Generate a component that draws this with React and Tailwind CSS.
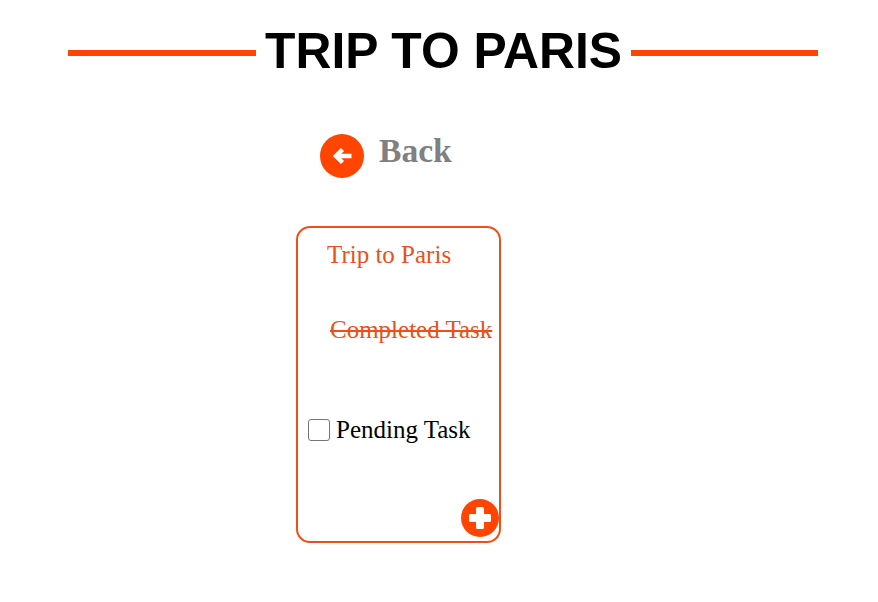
import React from 'react';

const App = () => {
  return (
    <div className="min-h-[602px] bg-white font-['Liberation_Serif',serif] overflow-hidden">
      {/* Page heading with rules */}
      <header className="flex items-center ml-[68px] mt-[23px] w-[750px]">
        <div className="h-[6px] w-[188px] bg-[#ff4500]"></div>
        <h1 className="ml-[9px] mr-[9px] pb-[4px] text-[49.8px] leading-[56px] font-bold text-black whitespace-nowrap font-['Liberation_Sans',sans-serif]">
          TRIP TO PARIS
        </h1>
        <div className="h-[6px] flex-1 bg-[#ff4500]"></div>
      </header>

      {/* Back link */}
      <div className="flex items-start ml-[320px] mt-[51px]">
        <div className="flex items-center justify-center w-[44px] h-[44px] rounded-full bg-[#ff4500]">
          <svg width="20" height="20" viewBox="0 0 20 20" fill="none" stroke="white" strokeWidth="4.5">
            <path d="M10.5 3.5 L4 10 L10.5 16.5" />
            <path d="M4 10 H19.5" />
          </svg>
        </div>
        <span className="ml-[15px] mt-[-3px] text-[33.6px] leading-[40px] font-bold text-[#808080]">Back</span>
      </div>

      {/* Task card */}
      <div className="relative ml-[296px] mt-[48px] w-[205px] h-[317px] rounded-[14px] border-2 border-[#ec5019]">
        <p className="ml-[29px] mt-[13px] text-[25px] leading-[28px] text-[#ec5019]">Trip to Paris</p>
        <p className="ml-[32px] mt-[47px] text-[25px] leading-[28px] text-[#ec5019] line-through decoration-2 whitespace-nowrap">Completed Task</p>
        <label className="flex items-center ml-[10px] mt-[72px] text-[25px] leading-[28px] text-black">
          <input type="checkbox" className="appearance-none w-[22px] h-[22px] rounded-[3px] border border-[#767676] bg-white" />
          <span className="ml-[6px]">Pending Task</span>
        </label>
        <div className="absolute right-0 bottom-[4px] flex items-center justify-center w-[38px] h-[38px] rounded-full bg-[#ff4500]">
          <svg width="24" height="24" viewBox="0 0 24 24" fill="white">
            <path d="M9.5 1 H14.5 Q16 1 16 2.5 V8 H21.5 Q23 8 23 9.5 V14.5 Q23 16 21.5 16 H16 V21.5 Q16 23 14.5 23 H9.5 Q8 23 8 21.5 V16 H2.5 Q1 16 1 14.5 V9.5 Q1 8 2.5 8 H8 V2.5 Q8 1 9.5 1 Z" />
          </svg>
        </div>
      </div>
    </div>
  );
};

export default App;
